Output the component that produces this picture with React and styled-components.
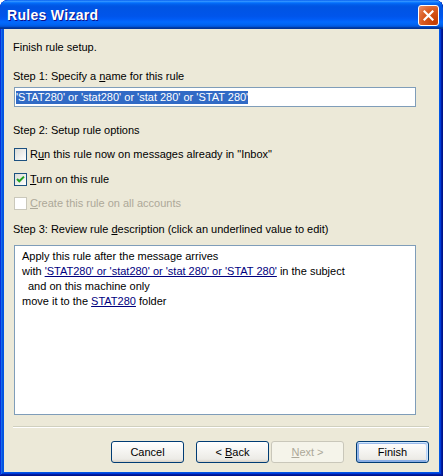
import React from "react";
import styled, { createGlobalStyle, css } from "styled-components";

const Global = createGlobalStyle`
  html, body { margin: 0; padding: 0; background: #ffffff; }
  body { font-family: "Liberation Sans", Arial, sans-serif; font-size: 11px; }
`;

const Frame = styled.div`
  width: 443px;
  height: 476px;
  box-sizing: border-box;
  display: flex;
  flex-direction: column;
  background: #0055e5;
  border-radius: 8px 8px 0 0;
  padding: 0 4px 4px 4px;
  box-shadow: inset -1px -1px #00138c, inset 1px 1px #0831d9,
    inset -2px -2px #001ea0, inset 2px 2px #166aee,
    inset -3px -3px #003bda, inset 3px 3px #0855dd;
  overflow: hidden;
`;

const TitleBar = styled.div`
  height: 29px;
  margin: 0 -4px;
  padding: 0 5px 0 7px;
  display: flex;
  align-items: center;
  justify-content: space-between;
  border-radius: 8px 8px 0 0;
  background: linear-gradient(
    180deg,
    #0058ee 0%,
    #3593ff 4%,
    #288eff 6%,
    #127dff 8%,
    #036ffc 10%,
    #0262ee 14%,
    #0057e5 20%,
    #0054e3 24%,
    #0055eb 56%,
    #005bf5 66%,
    #026afe 76%,
    #0062ef 86%,
    #0052d6 92%,
    #0040ab 94%,
    #003092 100%
  );
`;

const Title = styled.span`
  font-family: "Liberation Sans", Arial, sans-serif;
  font-weight: bold;
  font-size: 14px;
  color: #ffffff;
  text-shadow: 1px 1px #0f1089;
  letter-spacing: 0.3px;
  padding-top: 1px;
`;

const CloseButton = styled.div`
  width: 21px;
  height: 21px;
  box-sizing: border-box;
  border: 1px solid #ffffff;
  border-radius: 3px;
  background: radial-gradient(
    circle at 85% 85%,
    #c43c00 0%,
    #d85a20 55%,
    #df6a35 70%,
    #e8835a 90%
  );
  display: flex;
  align-items: center;
  justify-content: center;
  margin-top: 1px;
  margin-right: -1px;
`;

const Body = styled.div`
  flex: 1;
  background: #ece9d8;
  display: flex;
  flex-direction: column;
  padding: 12px 10px 9px 9px;
`;

const Label = styled.div`
  line-height: 13px;
  height: 13px;
  color: ${(p) => (p.$disabled ? "#aca899" : "#000000")};
  margin-top: ${(p) => p.$mt || 0}px;
  white-space: nowrap;
`;

const U = styled.span`
  text-decoration: underline;
  text-underline-offset: 1px;
`;

const TextInput = styled.div`
  margin: 4px 0 0 1px;
  width: 402px;
  height: 20px;
  box-sizing: border-box;
  border: 1px solid #7f9db9;
  background: #ffffff;
  display: flex;
  align-items: center;
  padding-left: 1px;
`;

const Selected = styled.span`
  background: #316ac5;
  color: #ffffff;
  line-height: 13px;
  white-space: nowrap;
`;

const CheckRow = styled.div`
  margin-top: ${(p) => p.$mt}px;
  display: flex;
  align-items: center;
  gap: 3px;
  height: 13px;
  padding-left: 1px;
`;

const Box = styled.div`
  width: 13px;
  height: 13px;
  box-sizing: border-box;
  border: 1px solid ${(p) => (p.$disabled ? "#cac8bb" : "#1c5180")};
  background: ${(p) =>
    p.$disabled
      ? "#ffffff"
      : "linear-gradient(135deg, #dcdcd7 0%, #ffffff 100%)"};
  display: flex;
  align-items: center;
  justify-content: center;
`;

const Description = styled.div`
  margin: 9px 0 0 1px;
  width: 402px;
  height: 170px;
  box-sizing: border-box;
  border: 1px solid #7f9db9;
  background: #ffffff;
  padding: 3px 0 0 7px;
  line-height: 15px;
  color: #000000;
`;

const DescLine = styled.div`
  padding-left: ${(p) => p.$indent || 0}px;
  white-space: nowrap;
`;

const Link = styled.span`
  color: #000080;
  text-decoration: underline;
  text-underline-offset: 1px;
`;

const Separator = styled.div`
  margin-top: 11px;
  height: 0;
  border-top: 1px solid #d0d0bf;
  border-bottom: 1px solid #ffffff;
`;

const ButtonRow = styled.div`
  margin-top: 13px;
  display: flex;
  justify-content: flex-end;
`;

const Button = styled.div`
  width: 73px;
  height: 22px;
  box-sizing: border-box;
  margin-left: ${(p) => p.$ml || 0}px;
  border: 1px solid #003c74;
  border-radius: 3px;
  background: linear-gradient(180deg, #ffffff 0%, #ecebe6 86%, #d6d0c5 100%);
  display: flex;
  align-items: center;
  justify-content: center;
  color: #000000;
  line-height: 13px;
  ${(p) =>
    p.$default &&
    css`
      box-shadow: inset -1px 1px #cee7ff, inset 1px 2px #98b8ea,
        inset -2px 2px #bcd4f6, inset 1px -1px #89ade4,
        inset 2px -2px #89ade4;
    `}
  ${(p) =>
    p.$disabled &&
    css`
      border-color: #c9c7ba;
      background: #f5f4ea;
      color: #aca899;
    `}
`;

function Check() {
  return (
    <svg width="11" height="11" viewBox="0 0 11 11">
      <path
        d="M2 5 L4.3 7.3 L9 2.6"
        fill="none"
        stroke="#21a121"
        strokeWidth="2"
      />
    </svg>
  );
}

function CloseIcon() {
  return (
    <svg width="11" height="11" viewBox="0 0 11 11">
      <path
        d="M1.5 1.5 L9.5 9.5 M9.5 1.5 L1.5 9.5"
        stroke="#ffffff"
        strokeWidth="2.2"
        strokeLinecap="square"
      />
    </svg>
  );
}

export default function App() {
  return (
    <>
      <Global />
      <Frame>
        <TitleBar>
          <Title>Rules Wizard</Title>
          <CloseButton>
            <CloseIcon />
          </CloseButton>
        </TitleBar>
        <Body>
          <Label>Finish rule setup.</Label>
          <Label $mt={16}>
            Step 1: Specify a <U>n</U>ame for this rule
          </Label>
          <TextInput>
            <Selected>'STAT280' or 'stat280' or 'stat 280' or 'STAT 280'</Selected>
          </TextInput>
          <Label $mt={17}>Step 2: Setup rule options</Label>
          <CheckRow $mt={11}>
            <Box />
            <Label>
              R<U>u</U>n this rule now on messages already in "Inbox"
            </Label>
          </CheckRow>
          <CheckRow $mt={12}>
            <Box>
              <Check />
            </Box>
            <Label>
              <U>T</U>urn on this rule
            </Label>
          </CheckRow>
          <CheckRow $mt={11}>
            <Box $disabled />
            <Label $disabled>
              <U>C</U>reate this rule on all accounts
            </Label>
          </CheckRow>
          <Label $mt={13}>
            Step 3: Review rule <U>d</U>escription (click an underlined value to
            edit)
          </Label>
          <Description>
            <DescLine>Apply this rule after the message arrives</DescLine>
            <DescLine>
              with <Link>'STAT280' or 'stat280' or 'stat 280' or 'STAT 280'</Link>{" "}
              in the subject
            </DescLine>
            <DescLine $indent={6}>and on this machine only</DescLine>
            <DescLine>
              move it to the <Link>STAT280</Link> folder
            </DescLine>
          </Description>
          <Separator />
          <ButtonRow>
            <Button>Cancel</Button>
            <Button $ml={12}>
              &lt;&nbsp;<U>B</U>ack
            </Button>
            <Button $ml={2} $disabled>
              <U>N</U>ext&nbsp;&gt;
            </Button>
            <Button $ml={12} $default>
              Finish
            </Button>
          </ButtonRow>
        </Body>
      </Frame>
    </>
  );
}
